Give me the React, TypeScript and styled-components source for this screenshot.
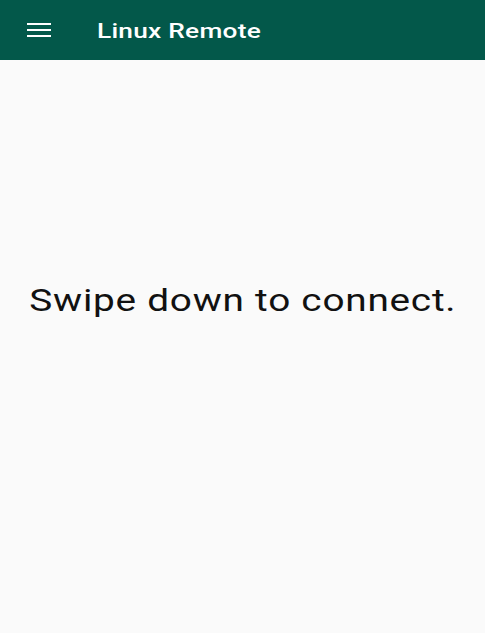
import React from "react";
import styled, { createGlobalStyle } from "styled-components";

const Global = createGlobalStyle`
  html, body { margin: 0; padding: 0; background: #ffffff; }
  body { font-family: Roboto, "Liberation Sans", sans-serif; }
`;

const Screen = styled.div`
  width: 485px;
  height: 633px;
  display: flex;
  flex-direction: column;
  background: #fafafa;
`;

const AppBar = styled.header`
  height: 60px;
  flex: none;
  background: #03584a;
  display: flex;
  align-items: center;
  padding-left: 27px;
  gap: 46px;
  box-sizing: border-box;
`;

const MenuButton = styled.div`
  width: 24px;
  height: 14px;
  display: flex;
  flex-direction: column;
  justify-content: space-between;
  margin-top: -1px;
`;

const MenuLine = styled.span`
  display: block;
  height: 2px;
  background: #ffffff;
`;

const Title = styled.h1`
  margin: 0;
  color: #ffffff;
  font-family: Roboto, sans-serif;
  font-weight: 500;
  font-size: 21px;
  letter-spacing: 0.2px;
  padding-top: 1px;
  transform: scaleX(1.25);
  transform-origin: left center;
`;

const Content = styled.main`
  flex: 1;
  display: flex;
  align-items: center;
  justify-content: center;
  padding-bottom: 92px;
`;

const Message = styled.p`
  margin: 0;
  color: #111111;
  font-family: Roboto, sans-serif;
  font-size: 31px;
  letter-spacing: 0.6px;
  transform: scaleX(1.25);
  transform-origin: center;
`;

export default function App() {
  return (
    <>
      <Global />
      <Screen>
        <AppBar>
          <MenuButton>
            <MenuLine />
            <MenuLine />
            <MenuLine />
          </MenuButton>
          <Title>Linux Remote</Title>
        </AppBar>
        <Content>
          <Message>Swipe down to connect.</Message>
        </Content>
      </Screen>
    </>
  );
}
